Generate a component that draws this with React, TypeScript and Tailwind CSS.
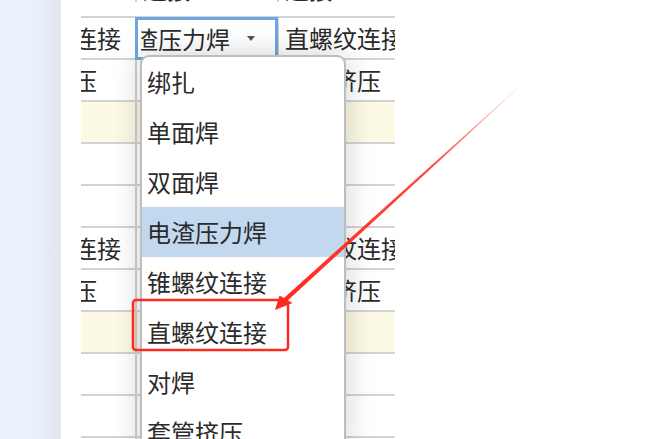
import React from "react";

type Row = { a?: string; b?: string; c?: string; tint?: boolean; editing?: boolean; head?: boolean };

const ROWS: Row[] = [
  { b: "连接", c: "连接", head: true },
  { a: "直螺纹连接", editing: true, c: "直螺纹连接" },
  { a: "套管挤压", c: "套管挤压" },
  { tint: true },
  {},
  {},
  { a: "直螺纹连接", b: "直螺纹连接", c: "直螺纹连接" },
  { a: "套管挤压", b: "套管挤压", c: "套管挤压" },
  { tint: true },
  {},
  {},
  {},
];

const OPTIONS = ["绑扎", "单面焊", "双面焊", "电渣压力焊", "锥螺纹连接", "直螺纹连接", "对焊", "套管挤压"];

function Cell({ text, w, pad = "pl-[6px]" }: { text?: string; w: string; pad?: string }) {
  return (
    <div className={`${w} ${pad} flex h-full shrink-0 items-center overflow-hidden whitespace-nowrap border-r-2 border-[#cfcfcf]`}>
      {text}
    </div>
  );
}

function Editor() {
  return (
    <div className="relative h-full w-[142px] shrink-0 border-r-2 border-[#cfcfcf]">
      <div className="absolute -left-[2px] -top-[1px] flex h-[43px] w-[143px] items-center border-[3px] border-[#6ea6e1] bg-white">
        <div className="ml-[3px] flex-1 overflow-hidden whitespace-nowrap">
          <span className="-ml-[31px] inline-block">电渣压力焊</span>
        </div>
        <div className="mr-[20px] h-0 w-0 border-x-4 border-t-[5px] border-x-transparent border-t-[#555]" />
      </div>
    </div>
  );
}

function Dropdown() {
  return (
    <div className="absolute left-[140px] top-[55px] h-[400px] w-[206px] overflow-hidden rounded-t-[9px] border-2 border-[#bdbdbd] bg-white shadow-[0_0_30px_rgba(0,0,0,0.18)]">
      {OPTIONS.map((o, i) => (
        <div key={o} className={`flex h-[50px] items-center pl-[5px] ${i === 3 ? "bg-[#c2d8ee]" : ""}`}>
          {o}
        </div>
      ))}
    </div>
  );
}

function Annotation() {
  return (
    <svg className="pointer-events-none absolute left-0 top-0" width="646" height="439" viewBox="0 0 646 439">
      <defs>
        <linearGradient id="fade" gradientUnits="userSpaceOnUse" x1="518" y1="88" x2="285" y2="300">
          <stop offset="0" stopColor="#ff2a1f" stopOpacity="0.1" />
          <stop offset="0.35" stopColor="#ff2a1f" stopOpacity="0.85" />
          <stop offset="1" stopColor="#ff2a1f" stopOpacity="1" />
        </linearGradient>
      </defs>
      <rect x="133" y="300" width="155" height="50" rx="3" fill="none" stroke="#ff2a1f" strokeWidth="2.5" />
      <polygon points="518.2,88.2 286.6,301.6 283.4,298.4 517.8,87.8" fill="url(#fade)" />
      <polygon points="275,310 279.5,295.5 292.5,303" fill="#ff2a1f" />
    </svg>
  );
}

export default function App() {
  return (
    <div className="relative flex h-[439px] w-[646px] overflow-hidden bg-white font-['Noto_Sans_CJK_SC','Liberation_Sans',sans-serif] text-[24px] leading-none text-[#2b2b2b]">
      <div className="w-[61px] shrink-0 bg-gradient-to-r from-[#ebf2fb] via-[#eaf1fa] to-[#e1e7f0]" />
      <div className="w-[20px] shrink-0" />
      <div className="w-[314px] shrink-0 overflow-hidden">
        <div className="-ml-[84px] -mt-[24px] flex w-[430px] flex-col">
          {ROWS.map((r, i) => (
            <div
              key={i}
              className={`flex h-[42px] shrink-0 border-b-2 border-[#d3d3d3] ${r.tint ? "bg-[#fcfae5]" : "bg-white"} ${r.head ? "pb-[14px]" : ""}`}
            >
              <Cell text={r.a} w="w-[140px]" pad="pl-[4px]" />
              {r.editing ? <Editor /> : <Cell text={r.b} w="w-[142px]" />}
              <Cell text={r.c} w="w-[146px]" />
            </div>
          ))}
        </div>
      </div>
      <Dropdown />
      <Annotation />
    </div>
  );
}
